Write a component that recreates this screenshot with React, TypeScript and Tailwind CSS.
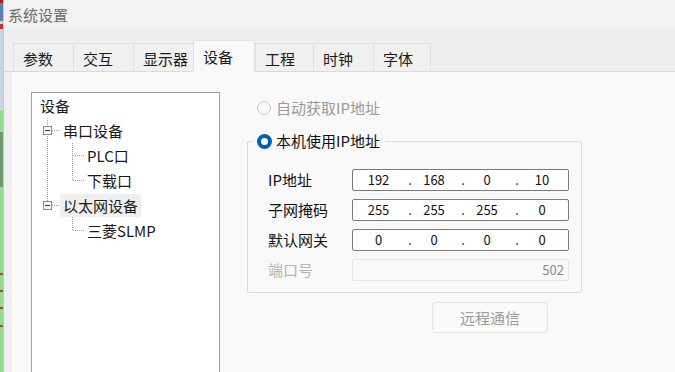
import React from "react";

const FONT = { fontFamily: "'Noto Sans CJK SC', 'Noto Sans', sans-serif" };

function Tab({ label, selected, w }: { label: string; selected?: boolean; w: string }) {
  if (selected) {
    return (
      <div
        className={`${w} h-[32px] -mb-px relative flex items-center pl-[9px] bg-[#f9f9f9] border-t border-l border-r border-[#e2e2e2] text-[15px] leading-[20px] text-[#1a1a1a]`}
      >
        {label}
      </div>
    );
  }
  return (
    <div
      className={`${w} h-[28px] flex items-center pl-[9px] bg-[#f0f0f0] border-t border-l border-[#e0e0e0] text-[15px] leading-[20px] text-[#1a1a1a] pt-[2px]`}
    >
      {label}
    </div>
  );
}

function TreeRow({ label, indent, hl }: { label: string; indent: string; hl?: boolean }) {
  return (
    <div className={`h-[25px] flex items-center ${indent}`}>
      <span className={`text-[15px] leading-[23px] text-[#1a1a1a] ${hl ? "bg-[#efefef] px-[3px] -ml-[3px]" : ""}`}>
        {label}
      </span>
    </div>
  );
}

function IpBox({ v }: { v: string[] }) {
  const seg = "flex justify-center whitespace-nowrap";
  return (
    <div className="w-[217px] h-[22px] border border-[#7a7a7a] rounded-[2px] bg-white flex items-center text-[13px] leading-[18px] text-[#111]">
      <span className={`${seg} w-[51px]`}>{v[0]}</span>
      <span className={`${seg} w-[12px]`}>.</span>
      <span className={`${seg} w-[36px]`}>{v[1]}</span>
      <span className={`${seg} w-[22px]`}>.</span>
      <span className={`${seg} w-[26px]`}>{v[2]}</span>
      <span className={`${seg} w-[34px]`}>.</span>
      <span className={`${seg} w-[16px]`}>{v[3]}</span>
    </div>
  );
}

function Row({ label, children, disabled }: { label: string; children: React.ReactNode; disabled?: boolean }) {
  return (
    <div className="flex items-center h-[22px]">
      <div className={`w-[84px] text-[15px] leading-[20px] ${disabled ? "text-[#b4b4b4]" : "text-[#111]"}`}>{label}</div>
      {children}
    </div>
  );
}

export default function App() {
  return (
    <div className="w-[675px] h-[372px] flex overflow-hidden bg-[#efefef]" style={FONT}>
      {/* background app edge */}
      <div className="w-[3px] flex flex-col shrink-0">
        <div className="h-[3px] bg-[#b02020]" />
        <div className="h-[18px] bg-[#5b7fb5]" />
        <div className="h-[3px] bg-[#c8d4e6]" />
        <div className="h-[5px] bg-[#c03030]" />
        <div className="h-[81px] bg-[#c8d4e6]" />
        <div className="h-[22px] bg-[#90de90]" />
        <div className="h-[55px] bg-[#6c9c6c]" />
        <div className="h-[86px] bg-[#90de90]" />
        <div className="h-[2px] bg-[#c04030]" />
        <div className="h-[15px] bg-[#90de90]" />
        <div className="h-[2px] bg-[#c04030]" />
        <div className="h-[15px] bg-[#90de90]" />
        <div className="h-[2px] bg-[#c04030]" />
        <div className="h-[16px] bg-[#90de90]" />
        <div className="h-[2px] bg-[#c04030]" />
        <div className="flex-1 bg-[#90de90]" />
      </div>
      <div className="w-px bg-[#c9c9c9] shrink-0" />

      {/* window */}
      <div className="flex-1 flex flex-col min-w-0 bg-[#efefef]">
        <div className="h-[30px] pl-[4px] pt-[2px] bg-[#f2f2f2]">
          <span className="text-[15px] leading-[20px] text-[#6b6b6b]">系统设置</span>
        </div>

        <div className="h-[42px] flex items-end pl-[9px] border-b border-[#dadada]">
          <Tab label="参数" w="w-[60px]" />
          <Tab label="交互" w="w-[60px]" />
          <Tab label="显示器" w="w-[60px]" />
          <Tab label="设备" w="w-[62px]" selected />
          <Tab label="工程" w="w-[58px]" />
          <Tab label="时钟" w="w-[60px]" />
          <div className="w-[58px] h-[28px] flex items-center pl-[9px] bg-[#f0f0f0] border-t border-l border-r border-[#e0e0e0] text-[15px] leading-[20px] text-[#1a1a1a] pt-[2px]">
            字体
          </div>
        </div>

        <div className="flex-1 ml-[8px] bg-[#f9f9f9] flex pl-[19px] pt-[20px] min-h-0">
          {/* tree */}
          <div className="w-[189px] h-[300px] shrink-0 border border-[#a0a0a0] bg-white relative">
            <svg className="absolute inset-0 pointer-events-none" width="187" height="298">
              <g stroke="#a0a0a0" strokeWidth="1" strokeDasharray="1 1" shapeRendering="crispEdges">
                <line x1="15.5" y1="25" x2="15.5" y2="109" />
                <line x1="20" y1="37.5" x2="28" y2="37.5" />
                <line x1="20" y1="112.5" x2="28" y2="112.5" />
                <line x1="40.5" y1="50" x2="40.5" y2="88" />
                <line x1="41" y1="62.5" x2="52" y2="62.5" />
                <line x1="41" y1="87.5" x2="52" y2="87.5" />
                <line x1="40.5" y1="124" x2="40.5" y2="138" />
                <line x1="41" y1="137.5" x2="52" y2="137.5" />
              </g>
              <g shapeRendering="crispEdges">
                <rect x="11.5" y="33.5" width="8" height="8" fill="#f4f4f4" stroke="#8c8c8c" />
                <line x1="13" y1="37.5" x2="18" y2="37.5" stroke="#3a3a3a" />
                <rect x="11.5" y="108.5" width="8" height="8" fill="#f4f4f4" stroke="#8c8c8c" />
                <line x1="13" y1="112.5" x2="18" y2="112.5" stroke="#3a3a3a" />
              </g>
            </svg>
            <div className="relative flex flex-col">
              <TreeRow label="设备" indent="pl-[8px]" />
              <TreeRow label="串口设备" indent="pl-[31px]" />
              <TreeRow label="PLC口" indent="pl-[55px]" />
              <TreeRow label="下载口" indent="pl-[55px]" />
              <TreeRow label="以太网设备" indent="pl-[31px]" hl />
              <TreeRow label="三菱SLMP" indent="pl-[55px]" />
            </div>
          </div>

          {/* right */}
          <div className="ml-[27px] w-[335px] flex flex-col">
            <div className="h-[32px] flex items-center pl-[10px]">
              <span className="w-[14px] h-[14px] rounded-full border border-[#c6c6c6] bg-[#f9f9f9]" />
              <span className="ml-[5px] text-[15px] leading-[20px] text-[#9a9a9a]">自动获取IP地址</span>
            </div>

            <fieldset className="mt-[7px] border border-[#dcdcdc] rounded-[2px] p-0 m-0 min-w-0">
              <legend className="ml-[4px] px-[5px] flex items-center h-[20px]">
                <span className="w-[15px] h-[15px] rounded-full border-[4px] border-[#005fb8] bg-white" />
                <span className="ml-[4px] text-[15px] leading-[20px] text-[#111]">本机使用IP地址</span>
              </legend>
              <div className="pl-[20px] pt-[18px] pb-[11px] flex flex-col gap-[8px]">
                <Row label="IP地址">
                  <IpBox v={["192", "168", "0", "10"]} />
                </Row>
                <Row label="子网掩码">
                  <IpBox v={["255", "255", "255", "0"]} />
                </Row>
                <Row label="默认网关">
                  <IpBox v={["0", "0", "0", "0"]} />
                </Row>
                <Row label="端口号" disabled>
                  <div className="w-[217px] h-[22px] border border-[#e4e4e4] rounded-[2px] bg-[#f9f9f9] flex items-center justify-end pr-[4px] text-[13px] leading-[18px] text-[#8a8a8a]">
                    502
                  </div>
                </Row>
              </div>
            </fieldset>

            <div className="mt-[9px] ml-[185px] w-[116px] h-[31px] rounded-[4px] border border-[#e4e4e4] bg-[#fafafa] flex items-center justify-center text-[15px] leading-[20px] text-[#9a9a9a]">
              远程通信
            </div>
          </div>
        </div>
      </div>
    </div>
  );
}
